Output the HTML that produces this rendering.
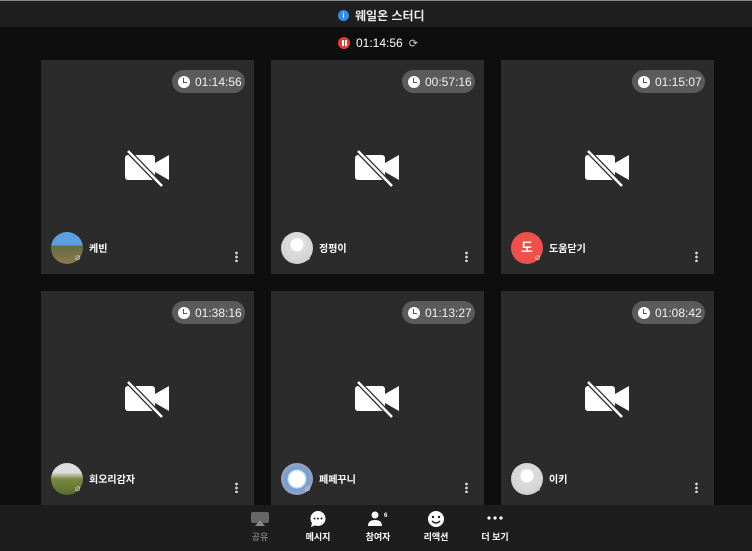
<!DOCTYPE html><html><head><meta charset="utf-8"><style>
*{margin:0;padding:0;box-sizing:border-box}
body{width:752px;height:551px;background:#0e0e0e;font-family:"Liberation Sans","Noto Sans CJK KR",sans-serif;color:#fff;position:relative;overflow:hidden}
.top{position:absolute;left:0;top:0;width:752px;height:27px;background:#1f1f1f;border-top:1px solid #888}
.title{position:absolute;left:338px;top:6px;font-size:12px;font-weight:bold;display:flex;align-items:center;gap:6px;color:#eee}
.ic{width:11px;height:11px;border-radius:50%;background:#2d8cf0;display:inline-block;font-size:8px;text-align:center;line-height:11px}
.rec{position:absolute;left:338px;top:36px;font-size:12px;display:flex;align-items:center;gap:6px}
.red{width:12px;height:12px;border-radius:50%;background:#e53935;position:relative}
.red:before,.red:after{content:"";position:absolute;top:3px;width:2px;height:6px;background:#fff}
.red:before{left:3.5px}.red:after{left:6.5px}
.tile{position:absolute;width:213px;height:214px;background:#2b2b2b}
.pill{position:absolute;right:9px;top:10px;height:23px;width:73px;border-radius:12px;background:#5b5b5b;font-size:12px;display:flex;align-items:center;padding-left:6px;gap:5px;color:#f0f0f0}
.clk{width:12px;height:12px;border-radius:50%;background:#fff;position:relative}
.clk:after{content:"";position:absolute;left:5px;top:2px;width:3px;height:4px;border-left:1.5px solid #555;border-bottom:1.5px solid #555}
.cam{position:absolute;left:84px;top:90px}
.av{position:absolute;left:10px;top:172px;width:32px;height:32px;border-radius:50%}
.mic{position:absolute;left:34px;top:192px;font-size:9px;color:#ccc}
.name{position:absolute;left:48px;top:180px;font-size:10px;font-weight:bold}
.dots{position:absolute;right:16px;top:191px;width:3px;height:11px;background:radial-gradient(circle,#ddd 1.2px,transparent 1.5px) 0 0/3px 4px}
.bot{position:absolute;left:0;top:505px;width:752px;height:46px;background:#1d1d1d}
.btn{position:absolute;top:6px;text-align:center;font-size:9px;font-weight:bold;width:50px;margin-left:-25px}
.btn svg{display:block;margin:0 auto 3px}
</style></head><body>
<div class="top"><div class="title"><span class="ic">i</span>웨일온 스터디</div></div>
<div class="rec"><span class="red"></span>01:14:56 <span style="font-size:11px;color:#ccc">⟳</span></div>

<svg width="0" height="0" style="position:absolute"><defs><g id="cam"><rect x="0" y="5" width="30" height="25" rx="3" fill="#fff"/><path d="M30 13 L44 5 V30 L30 22Z" fill="#fff"/><path d="M2 0 L36 35" stroke="#2b2b2b" stroke-width="5"/><path d="M3 1 L37 36" stroke="#fff" stroke-width="2.5"/></g></defs></svg>

<div class="tile" style="left:41px;top:60px"><div class="pill"><span class="clk"></span>01:14:56</div><svg class="cam" width="46" height="38"><use href="#cam"/></svg><div class="av" style="background:linear-gradient(#5aa0e0 40%,#6b6a40 45%,#8a7a50)"></div><div class="mic">⌀</div><div class="name">케빈</div><div class="dots"></div></div>
<div class="tile" style="left:271px;top:60px"><div class="pill"><span class="clk"></span>00:57:16</div><svg class="cam" width="46" height="38"><use href="#cam"/></svg><div class="av" style="background:radial-gradient(circle at 50% 40%,#fff 25%,#ddd 27%,#ccc)"></div><div class="mic">⌀</div><div class="name">정평이</div><div class="dots"></div></div>
<div class="tile" style="left:501px;top:60px"><div class="pill"><span class="clk"></span>01:15:07</div><svg class="cam" width="46" height="38"><use href="#cam"/></svg><div class="av" style="background:#f0504a;font-size:13px;font-weight:bold;text-align:center;line-height:32px">도</div><div class="mic">⌀</div><div class="name">도움닫기</div><div class="dots"></div></div>
<div class="tile" style="left:41px;top:291px"><div class="pill"><span class="clk"></span>01:38:16</div><svg class="cam" width="46" height="38"><use href="#cam"/></svg><div class="av" style="background:linear-gradient(#ddd 30%,#7a8a40 50%,#5a6a30)"></div><div class="mic">⌀</div><div class="name">회오리감자</div><div class="dots"></div></div>
<div class="tile" style="left:271px;top:291px"><div class="pill"><span class="clk"></span>01:13:27</div><svg class="cam" width="46" height="38"><use href="#cam"/></svg><div class="av" style="background:radial-gradient(circle,#fff 35%,#6aa0d8 45%,#e0a0a0)"></div><div class="mic">⌀</div><div class="name">페페꾸니</div><div class="dots"></div></div>
<div class="tile" style="left:501px;top:291px"><div class="pill"><span class="clk"></span>01:08:42</div><svg class="cam" width="46" height="38"><use href="#cam"/></svg><div class="av" style="background:radial-gradient(circle at 50% 40%,#fff 25%,#ddd 27%,#ccc)"></div><div class="mic">⌀</div><div class="name">이키</div><div class="dots"></div></div>

<div class="bot">
<div class="btn" style="left:260px;color:#777"><svg width="18" height="16"><rect x="0" y="1" width="18" height="11" rx="2" fill="#666"/><path d="M4 15 L9 9 L14 15Z" fill="#888"/></svg>공유</div>
<div class="btn" style="left:318px"><svg width="18" height="16"><circle cx="9" cy="7.5" r="7.5" fill="#fff"/><path d="M3 12 L2 16 L7 14Z" fill="#fff"/><circle cx="5.5" cy="7.5" r="1" fill="#1d1d1d"/><circle cx="9" cy="7.5" r="1" fill="#1d1d1d"/><circle cx="12.5" cy="7.5" r="1" fill="#1d1d1d"/></svg>메시지</div>
<div class="btn" style="left:378px"><svg width="24" height="16"><circle cx="9" cy="4" r="3.5" fill="#fff"/><path d="M2 15 Q2 9 9 9 Q16 9 16 15Z" fill="#fff"/><text x="18" y="6" font-size="6" fill="#fff" font-family="Liberation Sans">6</text></svg>참여자</div>
<div class="btn" style="left:436px"><svg width="18" height="16"><circle cx="9" cy="8" r="8" fill="#fff"/><circle cx="6" cy="6" r="1.2" fill="#1d1d1d"/><circle cx="12" cy="6" r="1.2" fill="#1d1d1d"/><path d="M5 10 Q9 14 13 10" stroke="#1d1d1d" stroke-width="1.4" fill="none"/></svg>리액션</div>
<div class="btn" style="left:495px"><svg width="18" height="16"><circle cx="3" cy="7" r="1.6" fill="#fff"/><circle cx="9" cy="7" r="1.6" fill="#fff"/><circle cx="15" cy="7" r="1.6" fill="#fff"/></svg>더 보기</div>
</div>
</body></html>
